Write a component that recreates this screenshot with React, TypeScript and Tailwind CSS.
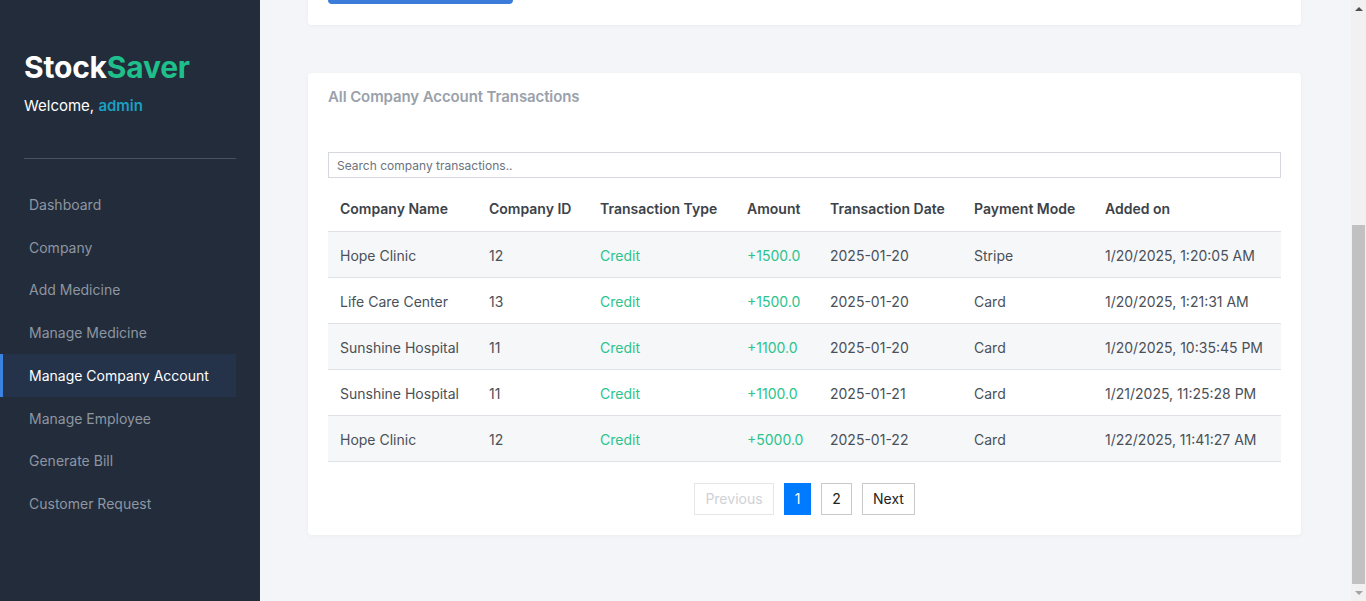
import React, { useLayoutEffect, useRef, useState } from 'react'

type Txn = {
    name: string
    id: number
    type: string
    amount: string
    date: string
    mode: string
    added: string
}

const transactions: Txn[] = [
    { name: 'Hope Clinic', id: 12, type: 'Credit', amount: '+1500.0', date: '2025-01-20', mode: 'Stripe', added: '1/20/2025, 1:20:05 AM' },
    { name: 'Life Care Center', id: 13, type: 'Credit', amount: '+1500.0', date: '2025-01-20', mode: 'Card', added: '1/20/2025, 1:21:31 AM' },
    { name: 'Sunshine Hospital', id: 11, type: 'Credit', amount: '+1100.0', date: '2025-01-20', mode: 'Card', added: '1/20/2025, 10:35:45 PM' },
    { name: 'Sunshine Hospital', id: 11, type: 'Credit', amount: '+1100.0', date: '2025-01-21', mode: 'Card', added: '1/21/2025, 11:25:28 PM' },
    { name: 'Hope Clinic', id: 12, type: 'Credit', amount: '+5000.0', date: '2025-01-22', mode: 'Card', added: '1/22/2025, 11:41:27 AM' },
]

const navItems = [
    'Dashboard',
    'Company',
    'Add Medicine',
    'Manage Medicine',
    'Manage Company Account',
    'Manage Employee',
    'Generate Bill',
    'Customer Request',
]

const Sidebar = () => {
    const active = 'Manage Company Account'
    return (
        <aside className="w-[260px] shrink-0 h-screen bg-[#222c3a] flex flex-col">
            {/* Brand */}
            <div className="px-6 pt-[49px]">
                <h1 className="text-[30px] leading-[36px] font-bold tracking-[-0.2px]">
                    <span className="text-white">Stock</span>
                    <span className="text-[#1fbf8c]">Saver</span>
                </h1>
                <p className="mt-[11px] text-[15px] leading-[20px] text-white">
                    Welcome, <span className="text-[#1a9fc2] font-semibold">admin</span>
                </p>
                <div className="mt-[42px] h-px bg-[#4a5260]"></div>
            </div>

            {/* Nav */}
            <nav className="mt-[24px] pr-6 flex flex-col">
                {navItems.map((item) => (
                    <a
                        key={item}
                        href="#"
                        className={
                            item === active
                                ? 'h-[42.75px] flex items-center border-l-[3px] border-[#3b82e0] bg-[#24334a] pl-[26px] text-[14px] text-white'
                                : 'h-[42.75px] flex items-center border-l-[3px] border-transparent pl-[26px] text-[14px] text-[#8e96a2] hover:text-white'
                        }
                    >
                        {item}
                    </a>
                ))}
            </nav>
        </aside>
    )
}

const AddTransactionCard = () => (
    <div className="bg-white rounded shadow-[0_1px_4px_rgba(0,0,0,0.04)] px-5 pt-5 pb-[21px]">
        <h2 className="text-[15px] leading-6 font-semibold text-[#9aa1ab]">Add Company Account Transaction</h2>
        <div className="mt-6 grid grid-cols-3 gap-5">
            <select className="h-[38px] border border-[#d9dde2] rounded px-3 text-sm text-[#495057]">
                <option>Select company</option>
            </select>
            <select className="h-[38px] border border-[#d9dde2] rounded px-3 text-sm text-[#495057]">
                <option>Credit</option>
            </select>
            <input placeholder="Amount" className="h-[38px] border border-[#d9dde2] rounded px-3 text-sm" />
            <input placeholder="Transaction date" className="h-[38px] border border-[#d9dde2] rounded px-3 text-sm" />
            <select className="h-[38px] border border-[#d9dde2] rounded px-3 text-sm text-[#495057]">
                <option>Card</option>
            </select>
            <input placeholder="Remarks" className="h-[38px] border border-[#d9dde2] rounded px-3 text-sm" />
        </div>
        <div className="h-[100px]"></div>
        <button className="w-[185px] h-[40px] rounded bg-[#3b7cdb] text-white text-[15px] font-medium">
            Add Transaction
        </button>
    </div>
)

const TransactionsCard = () => {
    const [search, setSearch] = useState('')
    const rows = transactions.filter((t) =>
        t.name.toLowerCase().includes(search.toLowerCase())
    )

    return (
        <div className="bg-white rounded shadow-[0_1px_4px_rgba(0,0,0,0.04)] px-5 pt-[14px] pb-5">
            <h2 className="text-[15px] leading-5 font-semibold text-[#9aa1ab] tracking-[-0.1px]">All Company Account Transactions</h2>

            <input
                value={search}
                onChange={(e) => setSearch(e.target.value)}
                placeholder="Search company transactions.."
                className="mt-[45px] w-full h-[26px] border border-[#d5d9de] px-2 text-[12px] text-[#495057] placeholder:text-[#6c737d] focus:outline-none"
            />

            <table className="mt-2 w-full border-collapse text-left text-[14px] whitespace-nowrap">
                <thead>
                    <tr className="border-b border-[#dee2e6]">
                        <th className="w-[149px] h-[45px] px-3 font-semibold text-[#3c4249]">Company Name</th>
                        <th className="w-[111px] px-3 font-semibold text-[#3c4249]">Company ID</th>
                        <th className="w-[147px] px-3 font-semibold text-[#3c4249]">Transaction Type</th>
                        <th className="w-[83px] px-3 font-semibold text-[#3c4249]">Amount</th>
                        <th className="w-[144px] px-3 font-semibold text-[#3c4249]">Transaction Date</th>
                        <th className="w-[131px] px-3 font-semibold text-[#3c4249]">Payment Mode</th>
                        <th className="px-3 font-semibold text-[#3c4249]">Added on</th>
                    </tr>
                </thead>
                <tbody>
                    {rows.map((t, i) => (
                        <tr
                            key={i}
                            className={
                                i % 2 === 0
                                    ? 'bg-[#f6f7f9] border-b border-[#dee2e6]'
                                    : 'bg-white border-b border-[#dee2e6]'
                            }
                        >
                            <td className="h-[46px] pt-[2px] px-3 text-[#4a5058]">{t.name}</td>
                            <td className="pt-[2px] px-3 text-[#4a5058]">{t.id}</td>
                            <td className="pt-[2px] px-3 text-[#2cc38c]">{t.type}</td>
                            <td className="pt-[2px] px-3 text-[#2cc38c]">{t.amount}</td>
                            <td className="pt-[2px] px-3 text-[#4a5058]">{t.date}</td>
                            <td className="pt-[2px] px-3 text-[#4a5058]">{t.mode}</td>
                            <td className="pt-[2px] px-3 text-[#4a5058]">{t.added}</td>
                        </tr>
                    ))}
                </tbody>
            </table>

            {/* Pagination */}
            <div className="mt-[21px] flex justify-center gap-[10px] text-[14px]">
                <button disabled className="h-[32px] w-[80px] border border-[#e6e6e6] text-[#cfd2d6]">Previous</button>
                <button className="h-[32px] w-[27px] bg-[#007bff] text-white">1</button>
                <button className="h-[32px] w-[31px] border border-[#c9c9c9] text-[#222]">2</button>
                <button className="h-[32px] w-[53px] border border-[#c9c9c9] text-[#222]">Next</button>
            </div>
        </div>
    )
}

// classic page scrollbar, since the browser hides its own
const ScrollBar = ({ top, size }: { top: number; size: number }) => (
    <div className="w-[15px] shrink-0 h-screen bg-[#f1f1f1] flex flex-col">
        <div className="h-[17px] flex items-center justify-center">
            <div className="w-0 h-0 border-x-[4px] border-x-transparent border-b-[4px] border-b-[#505050]"></div>
        </div>
        <div className="flex-1 flex flex-col">
            <div style={{ height: top }}></div>
            <div className="ml-[1px] w-[13px] bg-[#c1c1c1]" style={{ height: size }}></div>
        </div>
        <div className="h-[17px] flex items-center justify-center">
            <div className="w-0 h-0 border-x-[4px] border-x-transparent border-t-[4px] border-t-[#a3a3a3]"></div>
        </div>
    </div>
)

export default function App() {
    const mainRef = useRef<HTMLDivElement>(null)
    const [thumb, setThumb] = useState({ top: 204, size: 360 })

    // page is shown scrolled to the bottom
    useLayoutEffect(() => {
        const el = mainRef.current
        if (!el) return
        el.scrollTop = el.scrollHeight
        const track = el.clientHeight - 34
        const size = Math.round((track * el.clientHeight) / el.scrollHeight)
        const top = Math.round(((track - size) * el.scrollTop) / (el.scrollHeight - el.clientHeight || 1))
        setThumb({ top, size })
    }, [])

    return (
        <div className="h-screen flex overflow-hidden font-['Inter','Liberation_Sans',sans-serif]">
            <Sidebar />
            <main ref={mainRef} className="flex-1 h-screen overflow-y-auto bg-[#f4f5f9]">
                <div className="pl-12 pr-[50px] pt-12 pb-[66px] flex flex-col gap-12">
                    <AddTransactionCard />
                    <TransactionsCard />
                </div>
            </main>
            <ScrollBar top={thumb.top} size={thumb.size} />
        </div>
    )
}
